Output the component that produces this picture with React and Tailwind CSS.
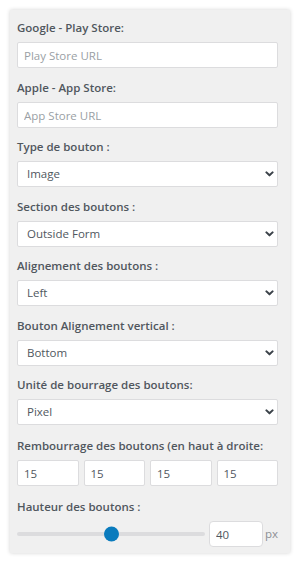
import React from "react";

function Label({ children }) {
    return (
        <div className="text-[11.5px] font-semibold leading-[18px] text-[#50575e] mb-[5px]">
            {children}
        </div>
    );
}

function Chevron() {
    return (
        <svg
            width="9"
            height="9"
            viewBox="0 0 10 10"
            className="absolute right-[4px] top-1/2 -translate-y-1/2 pointer-events-none"
        >
            <path
                d="M1.6 3.2 L5 6.5 L8.4 3.2"
                fill="none"
                stroke="#3c434a"
                strokeWidth="2.3"
                strokeLinecap="round"
                strokeLinejoin="round"
            />
        </svg>
    );
}

function SelectField({ label, value, options, gap }) {
    return (
        <div className={gap}>
            <Label>{label}</Label>
            <div className="relative">
                <select
                    defaultValue={value}
                    className="appearance-none block w-full h-[26px] bg-white border border-[#dcdcde] rounded-[2px] pl-[9px] pr-6 text-[11.5px] text-[#50575e] outline-none"
                >
                    {options.map((o) => (
                        <option key={o}>{o}</option>
                    ))}
                </select>
                <Chevron />
            </div>
        </div>
    );
}

function TextField({ label, placeholder, gap }) {
    return (
        <div className={gap}>
            <Label>{label}</Label>
            <input
                placeholder={placeholder}
                className="block w-full h-[26px] bg-white border border-[#dcdcde] rounded-[2px] px-[6px] text-[11.5px] text-[#50575e] placeholder:text-[#9a9fa5] outline-none"
            />
        </div>
    );
}

export default function App() {
    return (
        <div className="bg-white p-[10px] font-['Open_Sans',sans-serif]">
            <div className="w-[280px] bg-[#f0f0f0] shadow-[0_0_4px_rgba(0,0,0,0.18)] pl-[7px] pr-[12px] pt-[9px] pb-[6px]">
                <TextField
                    label="Google - Play Store:"
                    placeholder="Play Store URL"
                />
                <TextField
                    gap="mt-[11px]"
                    label="Apple - App Store:"
                    placeholder="App Store URL"
                />
                <SelectField
                    gap="mt-[10px]"
                    label="Type de bouton :"
                    value="Image"
                    options={["Image", "Text"]}
                />
                <SelectField
                    gap="mt-[11px]"
                    label="Section des boutons :"
                    value="Outside Form"
                    options={["Outside Form", "Inside Form"]}
                />
                <SelectField
                    gap="mt-[10px]"
                    label="Alignement des boutons :"
                    value="Left"
                    options={["Left", "Center", "Right"]}
                />
                <SelectField
                    gap="mt-[11px]"
                    label="Bouton Alignement vertical :"
                    value="Bottom"
                    options={["Top", "Bottom"]}
                />
                <SelectField
                    gap="mt-[10px]"
                    label="Unité de bourrage des boutons:"
                    value="Pixel"
                    options={["Pixel", "Percent"]}
                />

                <div className="mt-[12px]">
                    <Label>Rembourrage des boutons (en haut à droite:</Label>
                    <div className="grid grid-cols-4 gap-[5px]">
                        {["15", "15", "15", "15"].map((v, i) => (
                            <input
                                key={i}
                                defaultValue={v}
                                className="block w-full h-[26px] bg-white border border-[#dcdcde] rounded-[2px] px-[6px] text-[11.5px] text-[#50575e] outline-none"
                            />
                        ))}
                    </div>
                </div>

                <div className="mt-[12px]">
                    <Label>Hauteur des boutons :</Label>
                    <div className="flex items-center">
                        <div className="relative w-[190px] h-[4px] rounded-full bg-[#dcdcde]">
                            <div className="absolute left-[87px] top-1/2 -translate-y-1/2 w-[15px] h-[15px] rounded-full bg-[#0a7bbd]" />
                        </div>
                        <input
                            defaultValue="40"
                            className="ml-[4px] w-[54px] h-[26px] bg-white border border-[#dcdcde] rounded-[4px] px-[6px] text-[11.5px] text-[#50575e] outline-none"
                        />
                        <span className="ml-[2px] text-[11.5px] text-[#8c8f94]">px</span>
                    </div>
                </div>
            </div>
        </div>
    );
}
